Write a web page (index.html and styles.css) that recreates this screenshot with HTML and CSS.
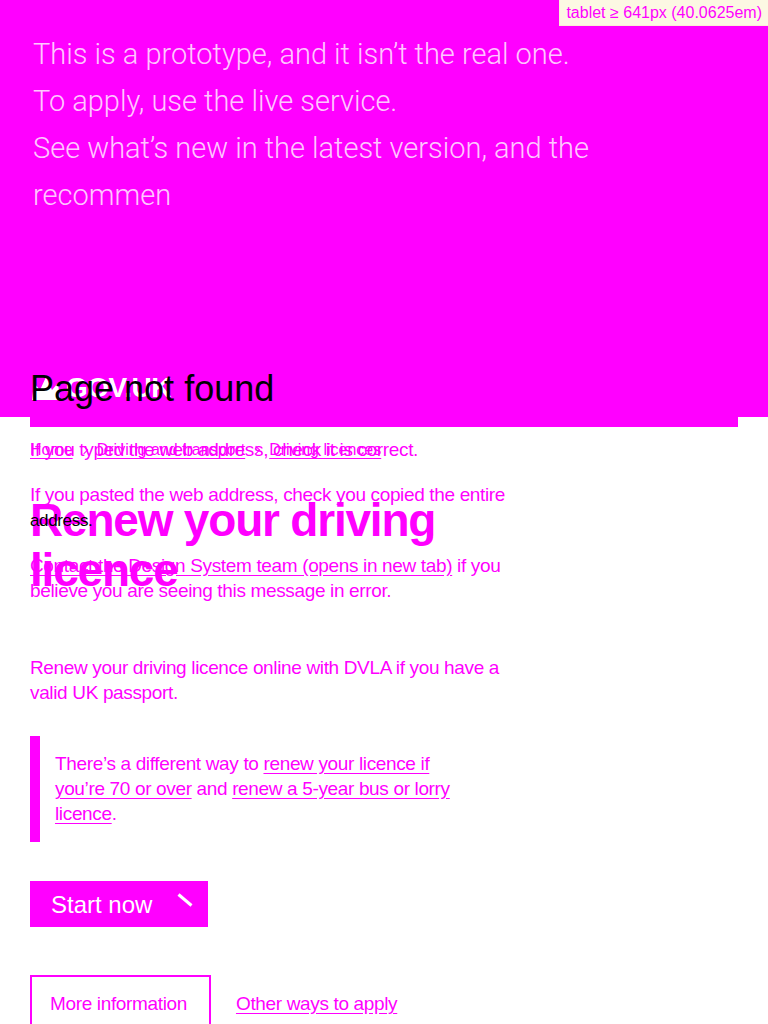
FILE: index.html
```html
<!DOCTYPE html>
<html lang="en">
<head>
<meta charset="utf-8">
<title>Renew your driving licence - GOV.UK</title>
<link rel="stylesheet" href="styles.css">
</head>
<body>
<div class="page">
  <header class="site-header">
    <p class="notice">This is a prototype, and it isn’t the real one.<br>To apply, use the live service.<br>See what’s new in the latest version, and the<br>recommen</p>
    <div class="logo-row">
      <a class="logo" href="#">
        <svg class="crown" viewBox="0 0 32 30" width="32" height="30" aria-hidden="true"><path d="M2 27 L4 10 L10 17 L16 4 L22 17 L28 10 L30 27 Z" fill="#fff"/></svg>
        <span class="logo-text">GOV.UK</span>
      </a>
    </div>
  </header>
  <div class="header-bar"></div>

  <main class="main">
    <nav class="breadcrumbs">
      <ol class="crumbs">
        <li class="crumb"><a href="#">Home</a></li>
        <li class="crumb"><a href="#">Driving and transport</a></li>
        <li class="crumb"><a href="#">Driving licences</a></li>
      </ol>
    </nav>
    <div class="column">
      <h1 class="title">Renew your driving licence</h1>
      <p class="body">Renew your driving licence online with DVLA if you have a valid UK passport.</p>
      <div class="inset">
        <p class="body flush">There’s a different way to <a href="#">renew your licence if you’re 70 or over</a> and <a href="#">renew a 5-year bus or lorry licence</a>.</p>
      </div>
      <a class="start" href="#">Start now
        <svg class="arrow" viewBox="0 0 16 14" width="16" height="14" aria-hidden="true"><path d="M1.5 1.5 L14.5 12.5" stroke="#fff" stroke-width="3" stroke-linecap="butt"/></svg>
      </a>
      <div class="actions">
        <a class="secondary" href="#">More information</a>
        <a class="other" href="#">Other ways to apply</a>
      </div>
    </div>
  </main>

  <section class="notfound">
    <h2 class="nf-title">Page not found</h2>
    <p class="body">If you typed the web address, check it is correct.</p>
    <p class="body">If you pasted the web address, check you copied the entire <span class="ghost">address.</span></p>
    <p class="body"><a href="#">Contact the Design System team (opens in new tab)</a> if you believe you are seeing this message in error.</p>
  </section>

  <div class="mq">tablet ≥ 641px (40.0625em)</div>
</div>
</body>
</html>
```

FILE: styles.css
```css
html, body {
  margin: 0;
  padding: 0;
  background: #ffffff;
}

body {
  font-family: "Liberation Sans", Arial, sans-serif;
  color: #ff00ff;
}

.page {
  position: relative;
  width: 768px;
  height: 1024px;
  overflow: hidden;
}

/* header */
.site-header {
  height: 417px;
  background: #ff00ff;
  display: flex;
  flex-direction: column;
  justify-content: space-between;
}

.notice {
  margin: 0;
  padding: 31px 33px 0;
  font-family: Roboto, "Liberation Sans", sans-serif;
  font-weight: 300;
  font-size: 29px;
  line-height: 47px;
  color: rgba(255, 255, 255, 0.8);
}

.logo-row {
  padding: 0 30px 10px;
}

.logo {
  display: inline-flex;
  align-items: flex-end;
  gap: 4px;
  color: #ffffff;
  text-decoration: none;
}

.crown {
  display: block;
}

.logo-text {
  font-weight: 700;
  font-size: 28px;
  line-height: 30px;
  letter-spacing: -0.5px;
}

.header-bar {
  margin: 0 30px;
  height: 10px;
  background: #ff00ff;
}

/* main page */
.main {
  padding: 0 30px;
}

.breadcrumbs {
  margin-top: 13px;
}

.crumbs {
  list-style: none;
  margin: 0;
  padding: 0;
  display: flex;
  font-size: 16px;
  line-height: 20px;
}

.crumb {
  display: flex;
  align-items: center;
}

.crumb + .crumb::before {
  content: "";
  width: 5px;
  height: 5px;
  margin: 0 10px 0 8px;
  border-top: 1px solid #ff00ff;
  border-right: 1px solid #ff00ff;
  transform: rotate(45deg);
}

.crumbs a {
  color: #ff00ff;
  text-decoration: underline;
  text-underline-offset: 3px;
}

.column {
  max-width: 480px;
}

.title {
  margin: 35px 0 60px;
  font-size: 46px;
  line-height: 50px;
  font-weight: 700;
  letter-spacing: -1.2px;
  color: #ff00ff;
}

.body {
  margin: 0 0 20px;
  font-size: 19px;
  line-height: 25px;
  letter-spacing: -0.35px;
  color: #ff00ff;
}

.body a {
  color: #ff00ff;
  text-decoration: underline;
  text-underline-offset: 3px;
}

.column > .body {
  margin-bottom: 31px;
}

.flush {
  margin: 0;
}

.inset {
  box-sizing: border-box;
  max-width: 450px;
  margin: 0 0 39px;
  padding: 15px 15px 16px;
  border-left: 10px solid #ff00ff;
}

.start {
  box-sizing: border-box;
  display: inline-flex;
  align-items: center;
  height: 46px;
  padding: 2px 15px 0 21px;
  background: #ff00ff;
  color: #ffffff;
  font-size: 24px;
  line-height: 24px;
  text-decoration: none;
}

.arrow {
  display: block;
  margin-left: 25px;
  margin-top: -10px;
}

.actions {
  display: flex;
  align-items: flex-start;
  margin-top: 48px;
}

.secondary {
  display: block;
  padding: 14px 22px 14px 18px;
  border: 2px solid #ff00ff;
  color: #ff00ff;
  font-size: 19px;
  line-height: 25px;
  letter-spacing: -0.35px;
  text-decoration: none;
}

.other {
  margin-left: 25px;
  padding-top: 16px;
  color: #ff00ff;
  font-size: 19px;
  line-height: 25px;
  letter-spacing: -0.35px;
  text-decoration: underline;
  text-underline-offset: 3px;
}

/* overlaid "page not found" layer */
.notfound {
  position: absolute;
  top: 369px;
  left: 30px;
  width: 500px;
}

.nf-title {
  margin: 0 0 28px;
  font-size: 36px;
  line-height: 40px;
  font-weight: 400;
  color: #000000;
}

.ghost {
  color: #000000;
  font-size: 17px;
}

/* breakpoint indicator */
.mq {
  position: absolute;
  top: 0;
  right: 0;
  padding: 3px 6px;
  background: #fcf8e3;
  border-left: 1px solid #fbeed5;
  border-bottom: 1px solid #fbeed5;
  color: #ff00ff;
  font-size: 16px;
  line-height: 19px;
  white-space: nowrap;
}
```
